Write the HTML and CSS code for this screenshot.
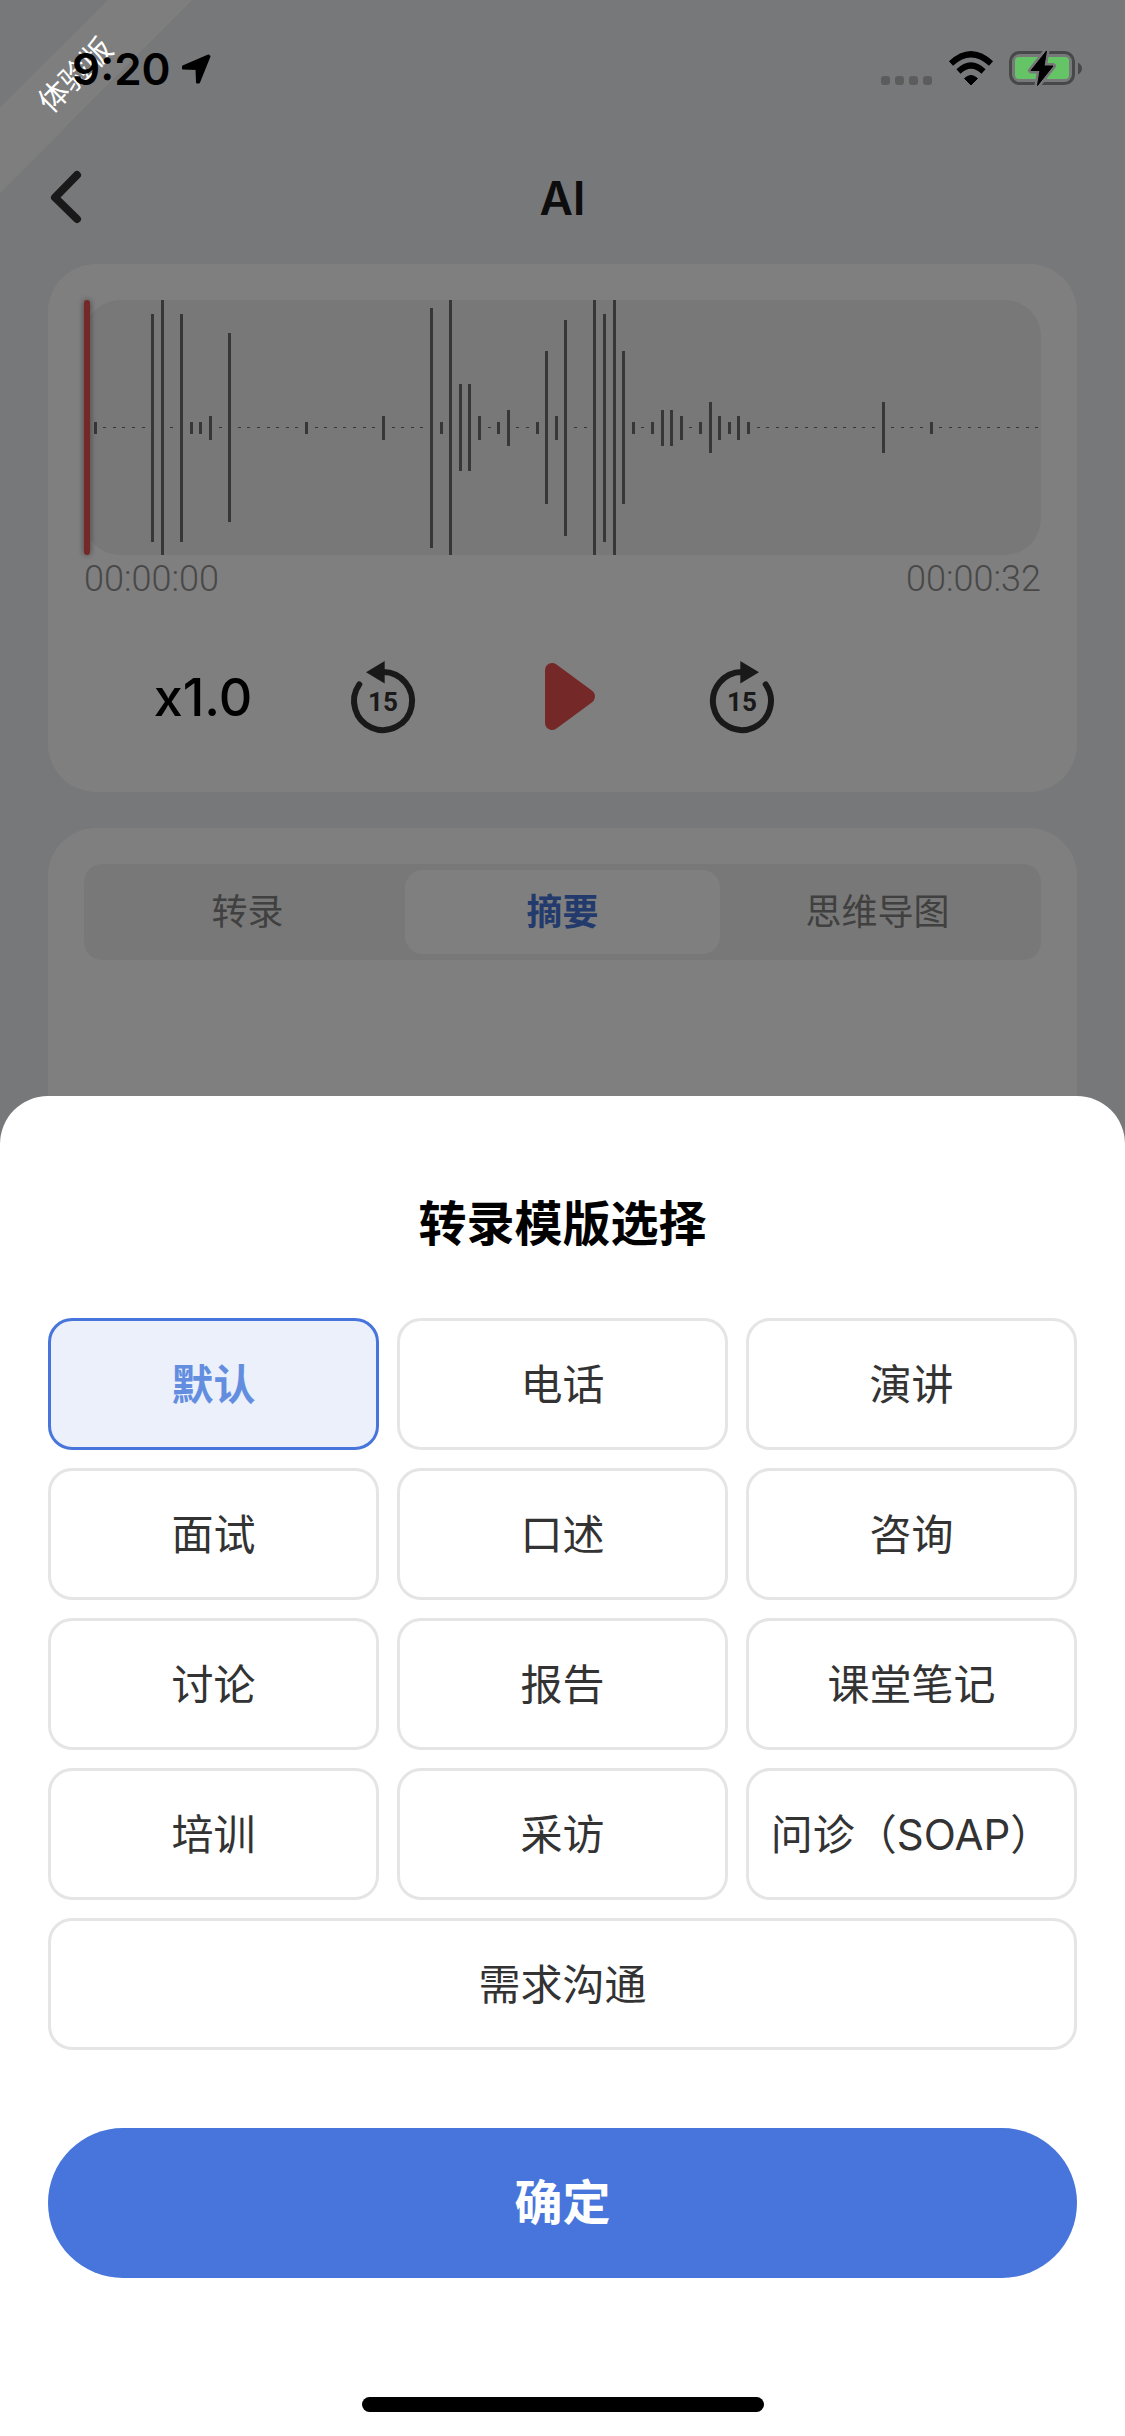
FILE: index.html
```html
<!DOCTYPE html>
<html lang="zh-CN">
<head>
<meta charset="utf-8">
<meta name="viewport" content="width=device-width, initial-scale=1">
<title>转录模版选择</title>
<link rel="stylesheet" href="styles.css">
</head>
<body>
<div class="screen">
  <div class="page">
    <header class="navbar">
      <button class="icon-button back" type="button" aria-label="返回">
        <svg width="36" height="60" viewBox="0 0 36 60"><path d="M29 7 7 29.500 29 51" fill="none" stroke="#333" stroke-width="8" stroke-linecap="round" stroke-linejoin="round"/></svg>
      </button>
      <h1 class="navbar-title">AI</h1>
    </header>

    <section class="card">
      <div class="wave">
        <div class="wave-bars" id="wave-bars"></div>
        <div class="wave-cursor"></div>
      </div>
      <div class="times"><span>00:00:00</span><span>00:00:32</span></div>
      <div class="controls">
        <button class="icon-button speed" type="button">x1.0</button>
        <button class="icon-button" type="button" aria-label="后退15秒">
          <svg width="72" height="78" viewBox="0 0 72 78">
            <path d="M12.300 25.400A29 29 0 1 0 36 13" fill="none" stroke="#333" stroke-width="6" stroke-linecap="round"/>
            <path d="M37.700 2v22.400L19 13.200z" fill="#333"/>
            <text class="skip-label" x="36" y="52" text-anchor="middle">15</text>
          </svg>
        </button>
        <button class="icon-button" type="button" aria-label="播放">
          <svg width="60" height="78" viewBox="0 0 60 78"><path d="M12 11 48 37.500 12 64z" fill="#eb5050" stroke="#eb5050" stroke-width="14" stroke-linejoin="round"/></svg>
        </button>
        <button class="icon-button" type="button" aria-label="前进15秒">
          <svg width="72" height="78" viewBox="0 0 72 78">
            <path d="M59.700 25.400A29 29 0 1 1 36 13" fill="none" stroke="#333" stroke-width="6" stroke-linecap="round"/>
            <path d="M34.300 2v22.400L53 13.200z" fill="#333"/>
            <text class="skip-label" x="36" y="52" text-anchor="middle">15</text>
          </svg>
        </button>
      </div>
    </section>

    <section class="card card-fill">
      <div class="tabs">
        <button class="tab" type="button">转录</button>
        <button class="tab tab-active" type="button">摘要</button>
        <button class="tab" type="button">思维导图</button>
      </div>
    </section>
  </div>

  <div class="overlay">
    <div class="ribbon">体验版</div>
    <div class="statusbar">
      <div class="status-left">
        <span>9:20</span>
        <svg width="30" height="30" viewBox="0 0 30 30"><path d="M27.500 1.500 2 12.500v2l13.500.5.500 13.500h2L28.500 2.500z" stroke="#000" stroke-width="2" stroke-linejoin="round"/></svg>
      </div>
      <div class="status-right">
        <svg width="52" height="36" viewBox="0 0 52 36" fill="#5c5c5d"><rect y="25" width="9" height="9" rx="3"/><rect x="14" y="25" width="9" height="9" rx="3"/><rect x="28" y="25" width="9" height="9" rx="3"/><rect x="42" y="25" width="9" height="9" rx="3"/></svg>
        <svg width="46" height="36" viewBox="0 0 46 36"><path d="M23 34 16.500 27.500Q23 21.500 29.500 27.500z" stroke="#000" stroke-linejoin="round"/><path d="M3 12.500Q23-6 43 12.500M10.500 20.500Q23 8.500 35.500 20.500" fill="none" stroke="#000" stroke-width="6"/></svg>
        <svg width="74" height="36" viewBox="0 0 74 36">
          <rect x="1.500" y="1.500" width="63" height="31" rx="9" fill="none" stroke="#484849" stroke-width="3"/>
          <rect x="6" y="6" width="54" height="22" rx="4" fill="#65c466"/>
          <path d="M69 11.500v12q4-2.500 4-6t-4-6z" fill="#484849"/>
          <path d="M37.500 0 22 19.500h9L28.500 34.500 44 15h-9z" fill="#000" stroke="#77787a" stroke-width="6" stroke-linejoin="round"/>
          <path d="M37.500 0 22 19.500h9L28.500 34.500 44 15h-9z" fill="#000" stroke="#000" stroke-linejoin="round"/>
        </svg>
      </div>
    </div>
    <section class="sheet">
      <h2 class="sheet-title">转录模版选择</h2>
      <div class="options">
        <button class="option option-selected" type="button">默认</button>
        <button class="option" type="button">电话</button>
        <button class="option" type="button">演讲</button>
        <button class="option" type="button">面试</button>
        <button class="option" type="button">口述</button>
        <button class="option" type="button">咨询</button>
        <button class="option" type="button">讨论</button>
        <button class="option" type="button">报告</button>
        <button class="option" type="button">课堂笔记</button>
        <button class="option" type="button">培训</button>
        <button class="option" type="button">采访</button>
        <button class="option" type="button">问诊（SOAP）</button>
        <button class="option option-wide" type="button">需求沟通</button>
      </div>
      <button class="confirm" type="button">确定</button>
      <div class="home-indicator"></div>
    </section>
  </div>
</div>
<script src="wave.js"></script>
</body>
</html>
```
FILE: wave.js
```js
// Loudness of each sample, by index, in pixels of bar height; all others are silent.
const SAMPLES = 100;
const levels = {
  1: 12, 7: 228, 8: 255, 10: 228, 11: 12, 12: 12, 13: 24, 15: 189, 23: 12, 31: 24,
  36: 240, 37: 12, 38: 255, 39: 87, 40: 87, 41: 24, 43: 12, 44: 36, 47: 12, 48: 153,
  49: 24, 50: 216, 53: 255, 54: 228, 55: 255, 56: 153, 57: 12, 59: 12, 60: 36, 61: 36,
  62: 24, 64: 12, 65: 51, 66: 24, 67: 12, 68: 24, 69: 12, 83: 51, 88: 12
};
const holder = document.getElementById('wave-bars');
for (let i = 0; i < SAMPLES; i++) {
  const bar = document.createElement('i');
  bar.className = 'wave-bar';
  bar.style.height = (levels[i] || 1) + 'px';
  holder.append(bar);
}
```
FILE: styles.css
```css
* {
  box-sizing: border-box;
}

body {
  margin: 0;
  font-family: Inter, "Noto Sans CJK SC", sans-serif;
  color: #333;
}

button {
  font: inherit;
  color: inherit;
  border: 0;
  margin: 0;
  padding: 0;
  background: none;
  cursor: pointer;
}

svg {
  display: block;
}

.screen {
  position: relative;
  display: grid;
  min-height: 100vh;
  overflow: hidden;
}

.page,
.overlay {
  grid-area: 1 / 1;
}

.page {
  display: flex;
  flex-direction: column;
  gap: 36px;
  padding: 132px 48px 0;
  background: #eff0f4;
}

/* Navigation bar */
.navbar {
  display: grid;
  grid-template-columns: 60px 1fr 60px;
  align-items: center;
  height: 132px;
  margin-bottom: -36px;
}

.navbar-title {
  margin: 0;
  font-size: 46px;
  line-height: 60px;
  font-weight: 600;
  text-align: center;
  color: #1a1a1a;
}

/* Player */
.card {
  padding: 36px;
  border-radius: 48px;
  background: #fff;
}

.card-fill {
  flex: 1;
}

.wave {
  position: relative;
  height: 255px;
}

.wave-bars {
  display: flex;
  align-items: center;
  justify-content: space-between;
  height: 100%;
  padding-right: 2px;
  border-radius: 36px;
  background: #f1f1f1;
}

.wave-bar {
  width: 3px;
  background: #6e6e6e;
}

.wave-cursor {
  position: absolute;
  inset: 0 auto 0 0;
  width: 6px;
  border-radius: 3px;
  background: #eb5050;
  box-shadow: 0 0 6px rgba(0, 0, 0, 0.5);
}

.times {
  display: flex;
  justify-content: space-between;
  font-family: Roboto, sans-serif;
  font-size: 36px;
  line-height: 48px;
  font-weight: 300;
  color: #909090;
}

.controls {
  display: grid;
  grid-template-columns: 238px 122px 252px 92px;
  align-items: center;
  justify-items: center;
  height: 117px;
  margin-top: 36px;
}

.icon-button {
  display: flex;
  align-items: center;
  justify-content: center;
}

.back {
  justify-content: flex-start;
}

.speed {
  font-size: 52px;
  font-weight: 500;
  color: #000;
}

.skip-label {
  font-family: Roboto, sans-serif;
  font-size: 26px;
  font-weight: 700;
  fill: #333;
}

/* Tabs */
.tabs {
  display: grid;
  grid-template-columns: repeat(3, 1fr);
  padding: 6px;
  border-radius: 18px;
  background: #f1f1f1;
}

.tab {
  height: 84px;
  padding-bottom: 6px;
  border-radius: 18px;
  font-size: 36px;
  color: #808080;
}

.tab-active {
  background: #fff;
  color: #4775db;
  font-weight: 700;
}

/* Layers above the page */
.overlay {
  position: relative;
  display: flex;
  flex-direction: column;
  justify-content: space-between;
  background: rgba(0, 0, 0, 0.5);
}

.ribbon {
  position: absolute;
  top: 45px;
  left: -105px;
  width: 360px;
  height: 60px;
  background: #7e7e7e;
  color: #fff;
  font-size: 30px;
  line-height: 60px;
  text-align: center;
  transform: rotate(-45deg);
}

.statusbar {
  position: relative;
  display: flex;
  justify-content: space-between;
  padding: 39px 42px 0 72px;
  color: #000;
}

.status-left,
.status-right {
  display: flex;
  align-items: center;
  height: 60px;
}

.status-left {
  gap: 10px;
  font-size: 44px;
  font-weight: 600;
}

.status-right {
  gap: 15px;
}

/* Bottom sheet */
.sheet {
  padding: 92px 48px 24px;
  border-radius: 48px 48px 0 0;
  background: #fff;
}

.sheet-title {
  margin: 0 0 58px;
  font-size: 48px;
  line-height: 72px;
  font-weight: 700;
  text-align: center;
  color: #000;
}

.options {
  display: grid;
  grid-template-columns: repeat(3, 1fr);
  gap: 18px;
}

.option {
  height: 132px;
  padding-bottom: 6px;
  border: 3px solid #e5e5e5;
  border-radius: 24px;
  font-size: 42px;
  white-space: nowrap;
}

.option-selected {
  border-color: #4775db;
  background: #ebf0fb;
  color: #638edf;
  font-weight: 700;
}

.option-wide {
  grid-column: 1 / -1;
}

.confirm {
  display: block;
  width: 100%;
  height: 150px;
  margin-top: 78px;
  padding-bottom: 8px;
  border-radius: 75px;
  background: #4775db;
  color: #fff;
  font-size: 48px;
  font-weight: 700;
}

.home-indicator {
  width: 402px;
  height: 15px;
  margin: 119px auto 0;
  border-radius: 8px;
  background: #000;
}
```
